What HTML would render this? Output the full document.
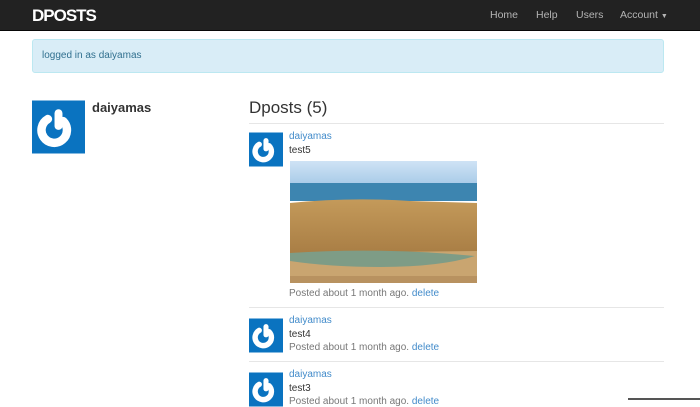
<!DOCTYPE html>
<html><head><meta charset="utf-8"><style>
*{margin:0;padding:0;box-sizing:border-box}
body{width:700px;height:400px;overflow:hidden;background:#fff;font-family:"Liberation Sans",Arial,sans-serif;position:relative;color:#333}
.a{position:absolute;white-space:nowrap}
.nav{position:absolute;left:0;top:0;width:700px;height:31px;background:#222;border-bottom:1px solid #080808}
.brand{left:32px;top:6px;font-size:17px;font-weight:bold;color:#fff;letter-spacing:-1px}
.ni{top:9px;font-size:10.5px;color:#b5b5b5}
.alert{left:32px;top:39px;width:632px;height:34px;background:#d9edf7;border:1px solid #bce8f1;border-radius:3px}
.lk{color:#428bca;font-size:10px}
.tx{font-size:10px;color:#333}
.gr{font-size:10px;color:#777}
.sep{position:absolute;left:249px;width:415px;height:1px;background:#e6e6e6}
svg.g{position:absolute}
</style></head><body>
<div class="nav"></div>
<div class="a brand">DPOSTS</div>
<div class="a ni" style="left:490px">Home</div>
<div class="a ni" style="left:536px">Help</div>
<div class="a ni" style="left:576px">Users</div>
<div class="a ni" style="left:620px">Account <span style="font-size:7px">&#9660;</span></div>
<div class="a alert"></div>
<div class="a" style="left:42px;top:50px;font-size:10px;color:#31708f">logged in as daiyamas</div>

<svg class="g" style="left:32px;top:100px" width="53" height="54" viewBox="0 0 100 100"><rect width="100" height="100" fill="#0a73c0"/><path d="M30 35 A24 24 0 1 0 59 39" fill="none" stroke="#fff" stroke-width="16" stroke-linecap="round"/><line x1="50" y1="24" x2="50" y2="48" stroke="#fff" stroke-width="15" stroke-linecap="round"/></svg>
<div class="a" style="left:92px;top:100px;font-size:13px;font-weight:bold;color:#333">daiyamas</div>

<div class="a" style="left:249px;top:98px;font-size:17px;font-weight:500;color:#333">Dposts (5)</div>
<div class="sep" style="top:123px"></div>

<svg class="g" style="left:249px;top:132px" width="34" height="35" viewBox="0 0 100 100"><rect width="100" height="100" fill="#0a73c0"/><path d="M30 35 A24 24 0 1 0 59 39" fill="none" stroke="#fff" stroke-width="16" stroke-linecap="round"/><line x1="50" y1="24" x2="50" y2="48" stroke="#fff" stroke-width="15" stroke-linecap="round"/></svg>
<div class="a lk" style="left:289px;top:131px">daiyamas</div>
<div class="a tx" style="left:289px;top:145px">test5</div>
<svg class="g" style="left:290px;top:161px" width="187" height="122" viewBox="0 0 187 122">
<defs><linearGradient id="s" x1="0" y1="0" x2="0" y2="1"><stop offset="0" stop-color="#cfe3f5"/><stop offset="1" stop-color="#a9cbe8"/></linearGradient>
<linearGradient id="d" x1="0" y1="0" x2="0" y2="1"><stop offset="0" stop-color="#c49a5a"/><stop offset="1" stop-color="#a97e45"/></linearGradient></defs>
<rect width="187" height="23" fill="url(#s)"/>
<rect y="22" width="187" height="18" fill="#3d85b0"/>
<path d="M0 42 Q60 36 120 40 L187 42 L187 92 L0 92 Z" fill="url(#d)"/>
<path d="M0 92 L187 90 L187 122 L0 122 Z" fill="#c9a570"/>
<path d="M0 92 Q90 86 185 95 Q150 106 90 106 Q40 106 0 100 Z" fill="#7e9c86"/>
<rect y="115" width="187" height="7" fill="#b89260"/>
</svg>
<div class="a gr" style="left:289px;top:288px">Posted about 1 month ago. <span class="lk">delete</span></div>
<div class="sep" style="top:307px"></div>

<svg class="g" style="left:249px;top:318px" width="34" height="35" viewBox="0 0 100 100"><rect width="100" height="100" fill="#0a73c0"/><path d="M30 35 A24 24 0 1 0 59 39" fill="none" stroke="#fff" stroke-width="16" stroke-linecap="round"/><line x1="50" y1="24" x2="50" y2="48" stroke="#fff" stroke-width="15" stroke-linecap="round"/></svg>
<div class="a lk" style="left:289px;top:315px">daiyamas</div>
<div class="a tx" style="left:289px;top:329px">test4</div>
<div class="a gr" style="left:289px;top:342px">Posted about 1 month ago. <span class="lk">delete</span></div>
<div class="sep" style="top:361px"></div>

<svg class="g" style="left:249px;top:372px" width="34" height="35" viewBox="0 0 100 100"><rect width="100" height="100" fill="#0a73c0"/><path d="M30 35 A24 24 0 1 0 59 39" fill="none" stroke="#fff" stroke-width="16" stroke-linecap="round"/><line x1="50" y1="24" x2="50" y2="48" stroke="#fff" stroke-width="15" stroke-linecap="round"/></svg>
<div class="a lk" style="left:289px;top:369px">daiyamas</div>
<div class="a tx" style="left:289px;top:383px">test3</div>
<div class="a gr" style="left:289px;top:396px">Posted about 1 month ago. <span class="lk">delete</span></div>
<div class="a" style="left:628px;top:398px;width:72px;height:2px;background:#555"></div>
</body></html>
